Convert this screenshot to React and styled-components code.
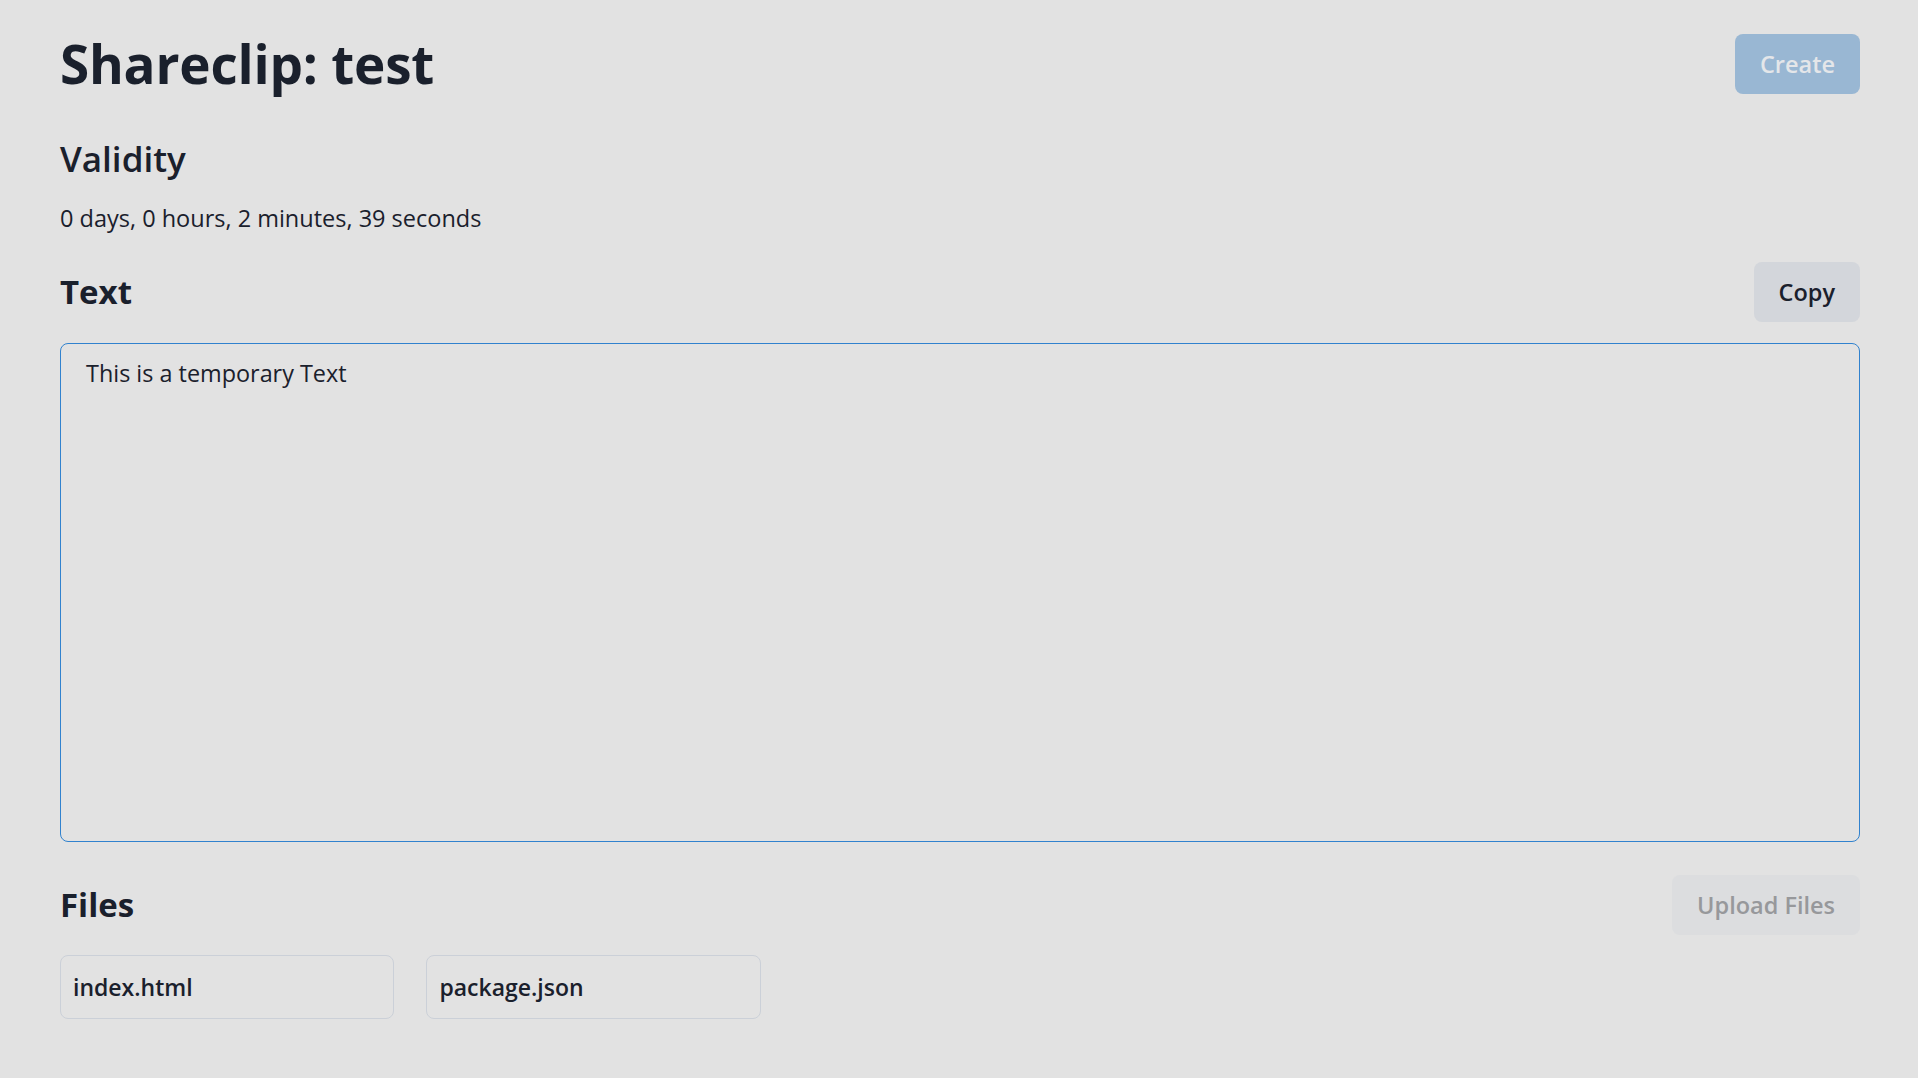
import React from "react";
import styled, { createGlobalStyle } from "styled-components";

const GlobalStyle = createGlobalStyle`
  * { box-sizing: border-box; }
  html, body {
    margin: 0;
    padding: 0;
    background: #e2e2e2;
  }
  body {
    font-family: "Open Sans", "Noto Sans", "Liberation Sans", sans-serif;
    color: #1a202c;
  }
`;

const Page = styled.main`
  padding: 34px 58px 40px 60px;
`;

const Row = styled.div`
  display: flex;
  align-items: center;
  justify-content: space-between;
  height: 60px;
  margin-top: ${(p) => p.$top || 0}px;
`;

const Title = styled.h1`
  margin: 0;
  font-size: 53px;
  line-height: 1.2;
  font-weight: 700;
  letter-spacing: -0.2px;
`;

const SectionTitle = styled.h2`
  margin: 0;
  font-size: ${(p) => (p.$semi ? 35 : 33)}px;
  line-height: 42px;
  font-weight: ${(p) => (p.$semi ? 600 : 700)};
`;

const Section = styled.section`
  margin-top: ${(p) => p.$top || 0}px;
`;

const Countdown = styled.p`
  margin: 21px 0 0;
  font-size: 23.5px;
  line-height: 35px;
  font-weight: 400;
`;

const Button = styled.button`
  height: 60px;
  padding: 0 25px;
  border: none;
  border-radius: 8px;
  font-family: inherit;
  font-size: 23.5px;
  font-weight: 600;
  background: ${(p) =>
    p.$variant === "primary" ? "#99b7d3" : p.$disabled ? "#dcdddf" : "#d3d6db"};
  color: ${(p) =>
    p.$variant === "primary" ? "#e4e6e9" : p.$disabled ? "#97989b" : "#1a202c"};
  cursor: ${(p) => (p.$disabled ? "not-allowed" : "pointer")};
`;

const TextArea = styled.textarea`
  display: block;
  width: 100%;
  height: 499px;
  margin-top: 21px;
  padding: 12px 25px;
  border: 1px solid #3182ce;
  border-radius: 8px;
  background: transparent;
  color: #1a202c;
  font-family: inherit;
  font-size: 23.4px;
  line-height: 35px;
  resize: none;
  outline: none;
`;

const FileGrid = styled.div`
  display: grid;
  grid-template-columns: repeat(5, 1fr);
  gap: 32px;
  margin-top: 20px;
`;

const FileCard = styled.div`
  padding: 14px 12px 13px;
  border: 1px solid #cbd0d8;
  border-radius: 8px;
  font-size: 23px;
  line-height: 35px;
  font-weight: 600;
`;

export default function App() {
  const files = ["index.html", "package.json"];
  return (
    <>
      <GlobalStyle />
      <Page>
        <Row>
          <Title>Shareclip: test</Title>
          <Button $variant="primary" $disabled disabled>
            Create
          </Button>
        </Row>

        <Section $top={44}>
          <SectionTitle $semi>Validity</SectionTitle>
          <Countdown>0 days, 0 hours, 2 minutes, 39 seconds</Countdown>
        </Section>

        <Row $top={26}>
          <SectionTitle>Text</SectionTitle>
          <Button>Copy</Button>
        </Row>
        <TextArea defaultValue="This is a temporary Text" />

        <Row $top={33}>
          <SectionTitle>Files</SectionTitle>
          <Button $disabled disabled>
            Upload Files
          </Button>
        </Row>
        <FileGrid>
          {files.map((f) => (
            <FileCard key={f}>{f}</FileCard>
          ))}
        </FileGrid>
      </Page>
    </>
  );
}
